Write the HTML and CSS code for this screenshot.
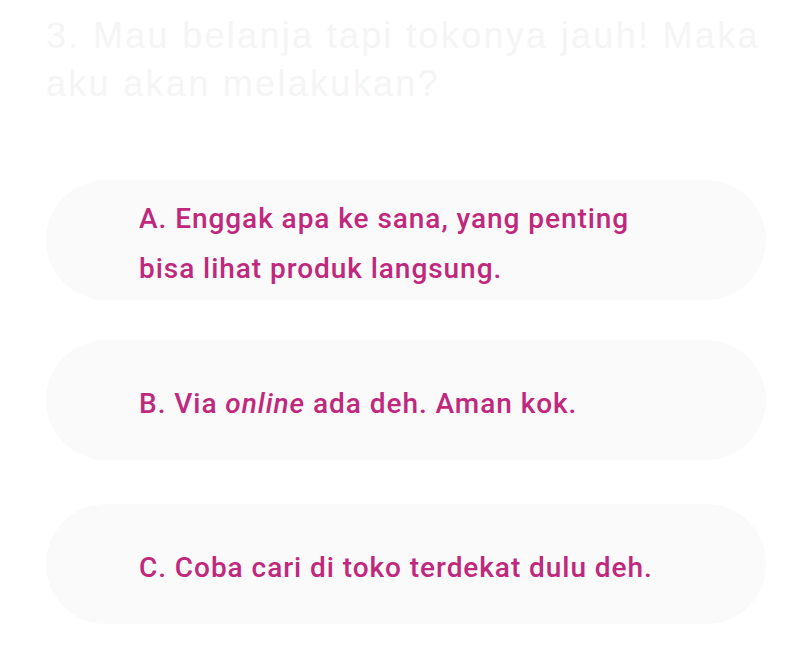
FILE: index.html
```html
<!DOCTYPE html>
<html lang="id">
<head>
<meta charset="utf-8">
<title>Kuis</title>
<link rel="stylesheet" href="styles.css">
</head>
<body>
<main class="quiz">
  <h1 class="question">3. Mau belanja tapi tokonya jauh! Maka aku akan melakukan?</h1>
  <ul class="options">
    <li class="option"><span class="option-text">A. Enggak apa ke sana, yang penting bisa lihat produk langsung.</span></li>
    <li class="option"><span class="option-text">B. Via <em>online</em> ada deh. Aman kok.</span></li>
    <li class="option option-last"><span class="option-text">C. Coba cari di toko terdekat dulu deh.</span></li>
  </ul>
</main>
</body>
</html>
```

FILE: styles.css
```css
html, body {
  margin: 0;
  padding: 0;
  background: #ffffff;
}

.quiz {
  padding: 12px 46px 0 46px;
}

.question {
  margin: 0;
  font-family: "Liberation Sans", Arial, sans-serif;
  font-weight: 400;
  font-size: 36px;
  line-height: 48px;
  letter-spacing: 2.3px;
  color: #f5f5f5;
}

.options {
  list-style: none;
  margin: 72px 0 0 0;
  padding: 0;
  display: flex;
  flex-direction: column;
  gap: 40px;
}

.option {
  box-sizing: border-box;
  min-height: 120px;
  padding: 7px 90px 0 93px;
  border-radius: 60px;
  background: #fafafa;
  display: flex;
  align-items: center;
  font-family: Roboto, "Noto Sans", sans-serif;
  font-weight: 500;
  font-size: 28px;
  line-height: 50px;
  letter-spacing: 0.95px;
  color: #c0287d;
}

.option em {
  font-style: italic;
}

.option-last {
  margin-top: 4px;
}
```
